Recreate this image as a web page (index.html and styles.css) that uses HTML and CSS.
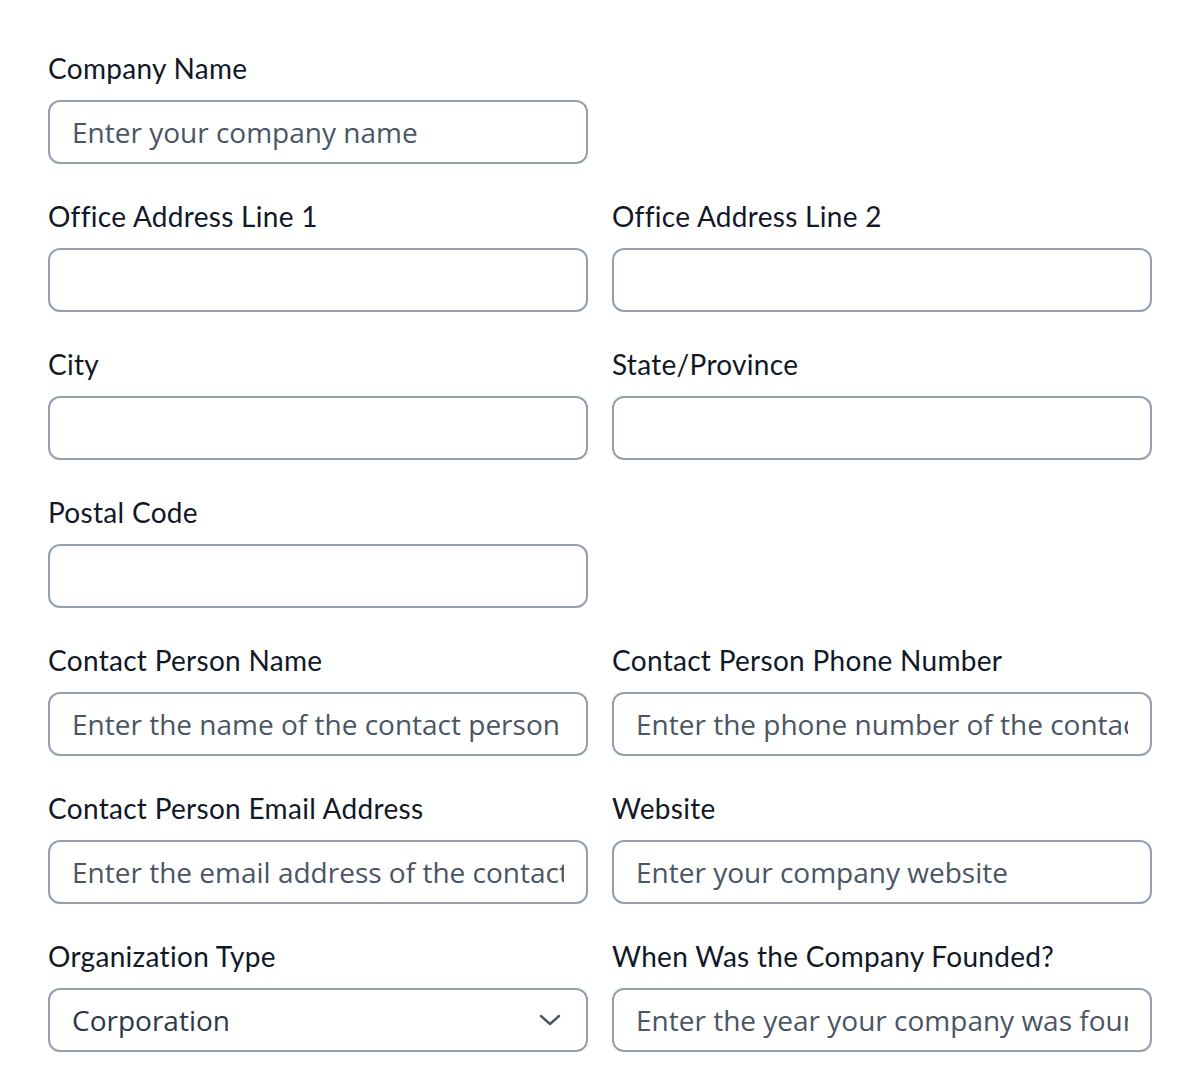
FILE: index.html
```html
<!DOCTYPE html>
<html>
<head>
<meta charset="utf-8">
<link rel="stylesheet" href="styles.css">
</head>
<body>
<form class="form">
  <div class="field">
    <label class="label">Company Name</label>
    <input class="input" placeholder="Enter your company name">
  </div>
  <div class="field empty"></div>

  <div class="field">
    <label class="label">Office Address Line 1</label>
    <input class="input">
  </div>
  <div class="field">
    <label class="label">Office Address Line 2</label>
    <input class="input">
  </div>

  <div class="field">
    <label class="label">City</label>
    <input class="input">
  </div>
  <div class="field">
    <label class="label">State/Province</label>
    <input class="input">
  </div>

  <div class="field">
    <label class="label">Postal Code</label>
    <input class="input">
  </div>
  <div class="field empty"></div>

  <div class="field">
    <label class="label">Contact Person Name</label>
    <input class="input" placeholder="Enter the name of the contact person">
  </div>
  <div class="field">
    <label class="label">Contact Person Phone Number</label>
    <input class="input" placeholder="Enter the phone number of the contact person">
  </div>

  <div class="field">
    <label class="label">Contact Person Email Address</label>
    <input class="input" placeholder="Enter the email address of the contact person">
  </div>
  <div class="field">
    <label class="label">Website</label>
    <input class="input" placeholder="Enter your company website">
  </div>

  <div class="field">
    <label class="label">Organization Type</label>
    <div class="select-wrap">
      <select class="input select">
        <option>Corporation</option>
      </select>
      <svg class="chevron" width="24" height="24" viewBox="0 0 24 24" fill="none" stroke="#4b5563" stroke-width="2.4" stroke-linecap="round" stroke-linejoin="round"><path d="M3 8l9 8 9-8"/></svg>
    </div>
  </div>
  <div class="field">
    <label class="label">When Was the Company Founded?</label>
    <input class="input" placeholder="Enter the year your company was founded">
  </div>
</form>
</body>
</html>
```

FILE: styles.css
```css
html, body {
  margin: 0;
  padding: 0;
  background: #ffffff;
}

.form {
  display: grid;
  grid-template-columns: 540px 540px;
  column-gap: 24px;
  row-gap: 32px;
  padding: 48px 48px;
}

.field {
  display: flex;
  flex-direction: column;
  gap: 12px;
}

.label {
  font-family: Lato, "Noto Sans", sans-serif;
  font-size: 28px;
  line-height: 40px;
  height: 40px;
  color: #111827;
  letter-spacing: 0.3px;
}

.input {
  box-sizing: border-box;
  width: 540px;
  height: 64px;
  border: 2px solid #949fb0;
  border-radius: 12px;
  padding: 0 22px;
  font-family: "Open Sans", "Noto Sans", sans-serif;
  font-size: 28px;
  color: #374151;
  background: #ffffff;
  outline: none;
}

.input::placeholder {
  color: #4b5563;
  opacity: 1;
}

.select-wrap {
  position: relative;
  width: 540px;
  height: 64px;
}

.select {
  appearance: none;
  -webkit-appearance: none;
  color: #2d3748;
}

.chevron {
  position: absolute;
  right: 26px;
  top: 20px;
  pointer-events: none;
}
```
